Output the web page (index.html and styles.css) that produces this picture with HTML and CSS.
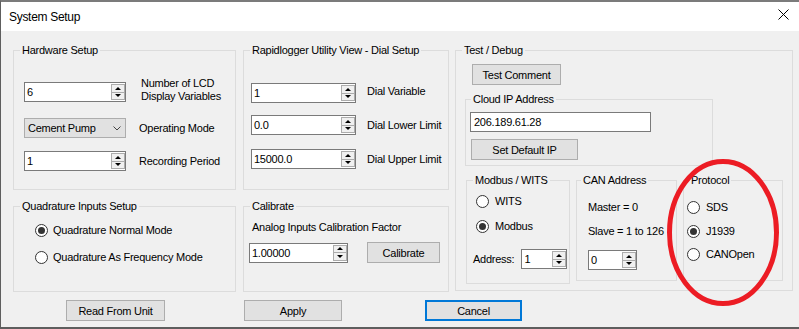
FILE: index.html
```html
<!DOCTYPE html>
<html lang="en">
<head>
  <meta charset="UTF-8" />
  <title>System Setup</title>
  <link rel="stylesheet" href="styles.css">
</head>
<body>
  <div id="dialog">
    <div id="titlebar">
      <span class="title">System Setup</span>
      <svg class="close" width="11" height="11" viewBox="0 0 11 11"><path d="M0.5 0.5 L10.5 10.5 M10.5 0.5 L0.5 10.5" stroke="#000" stroke-width="1" fill="none"/></svg>
    </div>

    <div id="content">
      <div class="columns">
        <!-- left column -->
        <div class="col col-1">
          <fieldset class="group g-top hw">
            <legend>Hardware Setup</legend>
            <div class="row r1 top-align">
              <div class="spin"><span class="val">6</span><span class="arrows"><i class="up"></i><i class="dn"></i></span></div>
              <span class="lbl two">Number of LCD<br>Display Variables</span>
            </div>
            <div class="row r2">
              <div class="combo"><span>Cement Pump</span><svg width="8" height="5" viewBox="0 0 8 5"><polyline points="0.5,0.5 4,4 7.5,0.5" fill="none" stroke="#444" stroke-width="1"/></svg></div>
              <span class="lbl">Operating Mode</span>
            </div>
            <div class="row r3">
              <div class="spin"><span class="val">1</span><span class="arrows"><i class="up"></i><i class="dn"></i></span></div>
              <span class="lbl">Recording Period</span>
            </div>
          </fieldset>

          <fieldset class="group g-bottom quad">
            <legend>Quadrature Inputs Setup</legend>
            <div class="radio on r1"><i></i>Quadrature Normal Mode</div>
            <div class="radio r2"><i></i>Quadrature As Frequency Mode</div>
          </fieldset>
        </div>

        <!-- middle column -->
        <div class="col col-2">
          <fieldset class="group g-top dial">
            <legend>Rapidlogger Utility View - Dial Setup</legend>
            <div class="row r1">
              <div class="spin"><span class="val">1</span><span class="arrows"><i class="up"></i><i class="dn"></i></span></div>
              <span class="lbl">Dial Variable</span>
            </div>
            <div class="row r2">
              <div class="spin"><span class="val">0.0</span><span class="arrows"><i class="up"></i><i class="dn"></i></span></div>
              <span class="lbl">Dial Lower Limit</span>
            </div>
            <div class="row r3">
              <div class="spin"><span class="val">15000.0</span><span class="arrows"><i class="up"></i><i class="dn"></i></span></div>
              <span class="lbl">Dial Upper Limit</span>
            </div>
          </fieldset>

          <fieldset class="group g-bottom cal">
            <legend>Calibrate</legend>
            <div class="cal-text">Analog Inputs Calibration Factor</div>
            <div class="row">
              <div class="spin"><span class="val">1.00000</span><span class="arrows"><i class="up"></i><i class="dn"></i></span></div>
              <button class="btn cal-btn">Calibrate</button>
            </div>
          </fieldset>
        </div>

        <!-- right column -->
        <div class="col col-3">
          <fieldset class="group debug">
            <legend>Test / Debug</legend>
            <button class="btn test-btn">Test Comment</button>

            <fieldset class="group cloud">
              <legend>Cloud IP Address</legend>
              <div class="textbox">206.189.61.28</div>
              <button class="btn ip-btn">Set Default IP</button>
            </fieldset>

            <div class="sub-groups">
              <fieldset class="group modbus">
                <legend>Modbus / WITS</legend>
                <div class="radio r1"><i></i>WITS</div>
                <div class="radio on r2"><i></i>Modbus</div>
                <div class="row addr">
                  <span class="lbl">Address:</span>
                  <div class="spin"><span class="val">1</span><span class="arrows"><i class="up"></i><i class="dn"></i></span></div>
                </div>
              </fieldset>

              <fieldset class="group can">
                <legend>CAN Address</legend>
                <div class="can-line r1">Master = 0</div>
                <div class="can-line r2">Slave = 1 to 126</div>
                <div class="spin"><span class="val">0</span><span class="arrows"><i class="up"></i><i class="dn"></i></span></div>
              </fieldset>

              <fieldset class="group proto">
                <legend>Protocol</legend>
                <div class="radio r1"><i></i>SDS</div>
                <div class="radio on r2"><i></i>J1939</div>
                <div class="radio r3"><i></i>CANOpen</div>
              </fieldset>
            </div>
          </fieldset>
        </div>
      </div>

      <div class="actions">
        <button class="btn read-btn">Read From Unit</button>
        <button class="btn apply-btn">Apply</button>
        <button class="btn cancel-btn">Cancel</button>
      </div>
    </div>

    <!-- hand drawn highlight -->
    <svg class="mark" width="140" height="170" viewBox="0 0 140 170"><ellipse cx="68" cy="82.5" rx="53.5" ry="71" fill="none" stroke="#ec1c24" stroke-width="5"/></svg>
  </div>
</body>
</html>
```

FILE: styles.css
```css
* {
  box-sizing: border-box;
}
body {
  margin: 0;
  background: #f0f0f0;
  font-family: 'Liberation Sans', Arial, sans-serif;
  font-size: 11px;
  letter-spacing: -0.25px;
  color: #000;
}
#dialog {
  position: relative;
  height: 329px;
  border-top: 2px solid #7b7b7b;
  border-left: 1px solid #5e5e5e;
  border-bottom: 2px solid #5e5e5e;
  background: #f0f0f0;
  overflow: hidden;
}
#titlebar {
  height: 29px;
  background: #fff;
  display: flex;
  align-items: center;
  justify-content: space-between;
  padding: 0 10px 0 8px;
}
.title {
  font-size: 12px;
  letter-spacing: -0.3px;
}
.close {
  align-self: flex-start;
  margin-top: 7px;
}

/* layout */
.columns {
  display: flex;
  align-items: flex-start;
  padding: 13px 0 0 12px;
}
.col {
  display: flex;
  flex-direction: column;
}
.col-1 { width: 223px; }
.col-2 { width: 206px; margin-left: 7px; }
.col-3 { width: 338px; margin-left: 6px; }

/* group boxes */
.group {
  margin: 0;
  padding: 0;
  min-width: 0;
  border: 1px solid #dcdcdc;
}
.group legend {
  margin-left: 6px;
  padding: 0 2px;
  line-height: 13px;
}
.g-top { height: 146px; }
.g-bottom { height: 92px; margin-top: 10px; }

.row {
  display: flex;
  align-items: center;
}
.row.top-align {
  align-items: flex-start;
}
.lbl {
  line-height: 14px;
  white-space: nowrap;
}
.lbl.two {
  line-height: 13px;
  margin-top: -5px;
}

/* spin box */
.spin {
  display: flex;
  height: 20px;
  background: #fff;
  border: 1px solid #7a7a7a;
}
.spin .val {
  flex: 1;
  padding-left: 2px;
  line-height: 18px;
}
.arrows {
  width: 14px;
  margin: 1px 0;
  display: flex;
  flex-direction: column;
}
.arrows i {
  flex: 1;
  display: flex;
  align-items: center;
  justify-content: center;
  background: #f0f0f0;
  border: 1px solid #acacac;
}
.arrows i.dn {
  border-top: none;
}
.arrows i::after {
  content: "";
  border-left: 3px solid transparent;
  border-right: 3px solid transparent;
}
.arrows i.up::after {
  border-bottom: 3px solid #000;
}
.arrows i.dn::after {
  border-top: 3px solid #000;
}

.combo {
  width: 102px;
  height: 20px;
  display: flex;
  align-items: center;
  justify-content: space-between;
  padding: 0 4px 0 3px;
  background: #e1e1e1;
  border: 1px solid #adadad;
}

.textbox {
  height: 20px;
  line-height: 18px;
  padding-left: 3px;
  background: #fff;
  border: 1px solid #7a7a7a;
}

/* buttons */
.btn {
  display: block;
  height: 21px;
  padding: 0;
  font: inherit;
  letter-spacing: inherit;
  color: #000;
  background: #e1e1e1;
  border: 1px solid #adadad;
}

/* radios */
.radio {
  display: flex;
  align-items: center;
  line-height: 14px;
  white-space: nowrap;
}
.radio i {
  width: 13px;
  height: 13px;
  margin-right: 6px;
  border: 1px solid #333;
  border-radius: 50%;
  background: #fff;
  display: flex;
  align-items: center;
  justify-content: center;
}
.radio.on i::after {
  content: "";
  width: 7px;
  height: 7px;
  border-radius: 50%;
  background: #333;
}

/* hardware */
.hw .row { padding-left: 10px; }
.hw .spin { width: 102px; }
.hw .lbl { margin-left: 13px; }
.hw .lbl.two { margin-left: 15px; }
.hw .r1 { margin-top: 25px; }
.hw .r2 { margin-top: 15px; }
.hw .r3 { margin-top: 13px; }

/* quadrature */
.quad .radio { margin-left: 21px; }
.quad .radio i { margin-right: 5px; }
.quad .r1 { margin-top: 10px; }
.quad .r2 { margin-top: 13px; }

/* dial */
.dial .row { padding-left: 7px; }
.dial .spin { width: 105px; }
.dial .lbl { margin-left: 11px; }
.dial .r1 { margin-top: 26px; }
.dial .r1 .lbl { margin-top: -4px; }
.dial .r2 { margin-top: 12px; }
.dial .r3 { margin-top: 14px; }

/* calibrate */
.cal-text {
  margin: 7px 0 0 8px;
  line-height: 14px;
}
.cal .row { margin: 8px 0 0 5px; }
.cal .spin { width: 99px; }
.cal-btn { width: 73px; margin-left: 19px; }

/* test / debug */
.debug { height: 247px; }
.test-btn { width: 89px; margin: 7px 0 0 16px; }
.cloud {
  width: 248px;
  height: 73px;
  margin: 8px 0 0 9px;
}
.cloud legend { margin-left: 5px; }
.cloud .textbox { width: 181px; margin: 6px 0 0 4px; }
.ip-btn { width: 107px; margin: 7px 0 0 5px; }

.sub-groups {
  display: flex;
  align-items: flex-start;
  gap: 6px;
  margin: 8px 0 0 10px;
}
.modbus { width: 104px; height: 110px; }
.can { width: 101px; height: 107px; }
.proto { width: 100px; height: 107px; }
.can legend { margin-left: 4px; }
.proto legend { margin-left: 5px; }

.modbus .radio { margin-left: 9px; }
.modbus .r1 { margin-top: 7px; }
.modbus .r2 { margin-top: 11px; }
.addr { margin: 16px 0 0 6px; }
.addr .spin { width: 46px; margin-left: 7px; }

.can-line {
  margin-left: 11px;
  line-height: 14px;
  white-space: nowrap;
}
.can .r1 { margin-top: 13px; }
.can .r2 { margin-top: 10px; }
.can .spin { width: 49px; margin: 12px 0 0 11px; }

.proto .radio { margin-left: 3px; }
.proto .radio i { margin-right: 6px; }
.proto .r1 { margin-top: 13px; }
.proto .r2 { margin-top: 10px; }
.proto .r3 { margin-top: 9px; }

/* bottom buttons */
.actions {
  display: flex;
  margin-top: 8px;
}
.read-btn { width: 99px; margin-left: 65px; }
.apply-btn { width: 98px; margin-left: 79px; }
.cancel-btn {
  width: 97px;
  margin-left: 83px;
  border: 2px solid #0078d7;
}

.mark {
  position: absolute;
  left: 654px;
  top: 148px;
}
```
